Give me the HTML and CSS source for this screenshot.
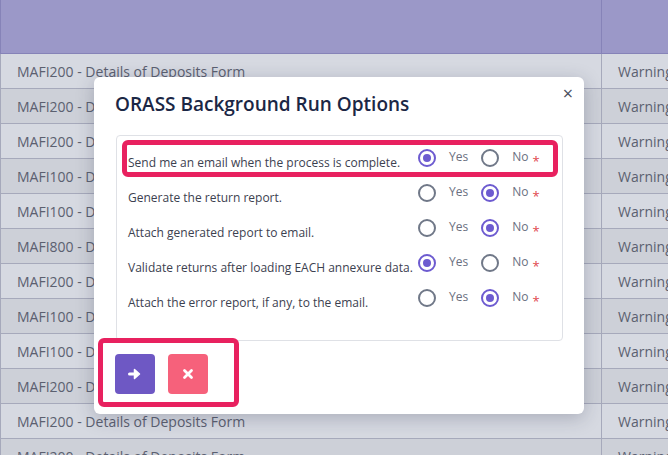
FILE: index.html
```html
<!DOCTYPE html>
<html lang="en">
<head>
  <meta charset="UTF-8" />
  <title>ORASS Background Run Options</title>
  <link rel="stylesheet" href="styles.css">
</head>
<body>
  <!-- Returns table behind the modal -->
  <table class="returns">
    <thead>
      <tr><th class="col-name"></th><th class="col-status"></th></tr>
    </thead>
    <tbody>
      <tr><td>MAFI200 - Details of Deposits Form</td><td>Warning</td></tr>
      <tr><td>MAFI200 - Details of Deposits Form</td><td>Warning</td></tr>
      <tr><td>MAFI200 - Details of Deposits Form</td><td>Warning</td></tr>
      <tr><td>MAFI100 - Details of Deposits Form</td><td>Warning</td></tr>
      <tr><td>MAFI100 - Details of Deposits Form</td><td>Warning</td></tr>
      <tr><td>MAFI800 - Details of Deposits Form</td><td>Warning</td></tr>
      <tr><td>MAFI200 - Details of Deposits Form</td><td>Warning</td></tr>
      <tr><td>MAFI100 - Details of Deposits Form</td><td>Warning</td></tr>
      <tr><td>MAFI100 - Details of Deposits Form</td><td>Warning</td></tr>
      <tr><td>MAFI200 - Details of Deposits Form</td><td>Warning</td></tr>
      <tr><td>MAFI200 - Details of Deposits Form</td><td>Warning</td></tr>
      <tr><td>MAFI200 - Details of Deposits Form</td><td>Warning</td></tr>
    </tbody>
  </table>

  <!-- Modal dialog -->
  <div class="modal">
    <span class="modal-close">&times;</span>
    <h2 class="modal-title">ORASS Background Run Options</h2>

    <div class="options">
      <div class="option-row">
        <span class="option-label">Send me an email when the process is complete.</span>
        <span class="choices">
          <span class="radio checked"></span><span class="choice">Yes</span>
          <span class="radio"></span><span class="choice">No</span><span class="req">*</span>
        </span>
      </div>
      <div class="option-row">
        <span class="option-label">Generate the return report.</span>
        <span class="choices">
          <span class="radio"></span><span class="choice">Yes</span>
          <span class="radio checked"></span><span class="choice">No</span><span class="req">*</span>
        </span>
      </div>
      <div class="option-row">
        <span class="option-label">Attach generated report to email.</span>
        <span class="choices">
          <span class="radio"></span><span class="choice">Yes</span>
          <span class="radio checked"></span><span class="choice">No</span><span class="req">*</span>
        </span>
      </div>
      <div class="option-row">
        <span class="option-label">Validate returns after loading EACH annexure data.</span>
        <span class="choices">
          <span class="radio checked"></span><span class="choice">Yes</span>
          <span class="radio"></span><span class="choice">No</span><span class="req">*</span>
        </span>
      </div>
      <div class="option-row">
        <span class="option-label">Attach the error report, if any, to the email.</span>
        <span class="choices">
          <span class="radio"></span><span class="choice">Yes</span>
          <span class="radio checked"></span><span class="choice">No</span><span class="req">*</span>
        </span>
      </div>
    </div>

    <div class="modal-footer">
      <button class="btn btn-run">
        <svg width="14" height="14" viewBox="0 0 14 14"><path d="M1.5 7h7" fill="none" stroke="#fff" stroke-width="3" stroke-linecap="round"/><path d="M6.5 2.5l5 4.5-5 4.5z" fill="#fff" stroke="#fff" stroke-width="1.5" stroke-linejoin="round"/></svg>
      </button>
      <button class="btn btn-cancel">
        <svg width="12" height="12" viewBox="0 0 12 12"><path d="M2.5 2.5l7 7M9.5 2.5l-7 7" fill="none" stroke="#fff" stroke-width="2.8" stroke-linecap="round"/></svg>
      </button>
    </div>
  </div>

  <!-- Annotation highlights -->
  <div class="mark mark-row"></div>
  <div class="mark mark-buttons"></div>
</body>
</html>
```

FILE: styles.css
```css
/* Global */
body {
  margin: 0;
  width: 668px;
  height: 455px;
  overflow: hidden;
  font-family: 'Open Sans', 'Noto Sans', sans-serif;
  background: #d3d6de;
  position: relative;
}

/* Background table (already dimmed by the modal backdrop) */
.returns {
  border-collapse: collapse;
  width: 700px;
  font-size: 14px;
  color: #5b6070;
}
.returns th {
  height: 53px;
  padding: 0;
  background: #9b98c8;
  border-right: 1px solid #8683b8;
  border-bottom: 1px solid #8683b8;
}
.returns .col-name {
  width: 600px;
  border-left: 1px solid #8683b8;
}
.returns td {
  height: 34px;
  padding: 0 0 0 16px;
  white-space: nowrap;
  border-bottom: 1px solid #a6a9bb;
  border-right: 1px solid #a6a9bb;
  border-left: 1px solid #a6a9bb;
  background: #d6d9e1;
}
.returns tbody tr:nth-child(even) td {
  background: #cdd0d8;
}

/* Modal */
.modal {
  position: absolute;
  left: 94px;
  top: 77px;
  width: 490px;
  height: 337px;
  box-sizing: border-box;
  padding: 12px 21px 0 21px;
  background: #fff;
  border-radius: 6px;
  box-shadow: 0 4px 18px rgba(40, 45, 70, 0.25);
}
.modal-close {
  position: absolute;
  right: 11px;
  top: 4px;
  font-size: 18px;
  color: #4a4f5c;
}
.modal-title {
  margin: 0;
  font-size: 19px;
  font-weight: 600;
  line-height: 30px;
  color: #1b2745;
}
.options {
  margin: 16px 0 0 1px;
  width: 447px;
  height: 206px;
  box-sizing: border-box;
  border: 1px solid #dfe1e6;
  border-radius: 4px;
  padding: 4px 0 0 11px;
}
.option-row {
  display: flex;
  height: 35px;
  align-items: center;
}
.option-label {
  flex: 1;
  font-size: 12px;
  color: #3c4150;
  padding-top: 9px;
}
.choices {
  display: flex;
  align-items: center;
  width: 144px;
  font-size: 12px;
  color: #6a7080;
}
.radio {
  width: 18px;
  height: 18px;
  box-sizing: border-box;
  border: 2px solid #707888;
  border-radius: 50%;
  position: relative;
}
.radio.checked {
  border-color: #6d5bd0;
}
.radio.checked::after {
  content: "";
  position: absolute;
  left: 3px;
  top: 3px;
  width: 8px;
  height: 8px;
  border-radius: 50%;
  background: #6d5bd0;
}
.choice {
  margin: 0 13px;
  position: relative;
  top: -1px;
}
.req {
  color: #e0474c;
  font-size: 13px;
  margin-left: -9px;
  position: relative;
  top: 3px;
}

/* Footer buttons */
.modal-footer {
  display: flex;
  gap: 13px;
  margin-top: 13px;
}
.btn {
  width: 40px;
  height: 40px;
  border: none;
  border-radius: 4px;
  padding: 0;
  display: flex;
  align-items: center;
  justify-content: center;
  cursor: pointer;
}
.btn-run {
  background: #6e58c4;
}
.btn-cancel {
  background: #f6617b;
}

/* Highlight annotations drawn over the screenshot */
.mark {
  position: absolute;
  border: 5px solid #e8215f;
  border-radius: 6px;
  box-sizing: border-box;
}
.mark-row {
  left: 122px;
  top: 140px;
  width: 436px;
  height: 37px;
}
.mark-buttons {
  left: 98px;
  top: 338px;
  width: 141px;
  height: 69px;
}
```
